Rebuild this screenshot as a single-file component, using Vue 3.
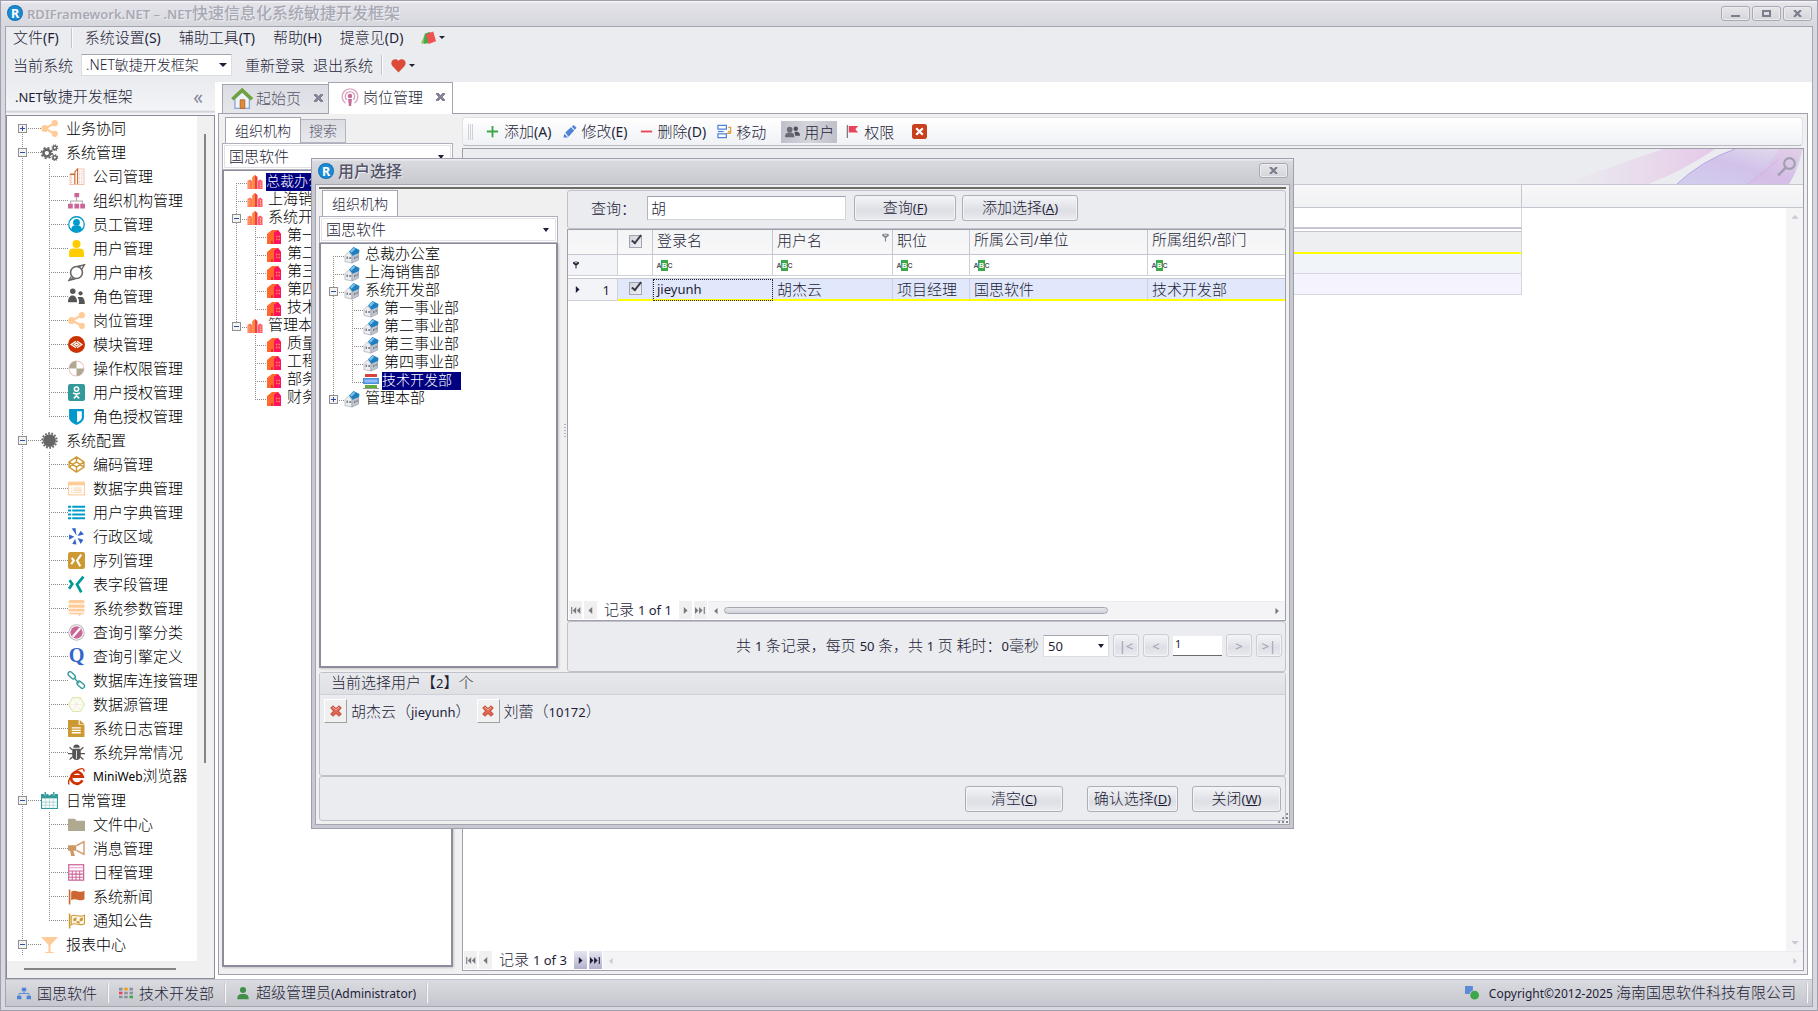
<script setup>
import { h, ref } from 'vue'

// Splits a caption into Latin and CJK runs; "&X" marks an underlined access key.
const Cap = (props) =>
  h('span', { class: 'cap' }, props.t.split(/([\x21-\x7e©–][\x20-\x7e©–]*)/).filter(Boolean).map((run) => {
    if (!/^[\x21-\x7e©–]/.test(run)) return run
    const m = run.match(/^(.*)&(.)(.*)$/)
    return h('span', { class: 'lat' }, m ? [m[1], h('u', m[2]), m[3]] : run)
  }))
Cap.props = ['t']

const icons = {
  share: '<g fill="#fc9" stroke="#fc9"><path d="M13 3 3.500 8 13 13" fill="none" stroke-width="2"/><circle cx="13" cy="3" r="2.400"/><circle cx="13" cy="13" r="2.400"/><circle cx="3.500" cy="8" r="2.800"/></g>',
  gears: '<g fill="none" stroke="#666"><circle cx="5.500" cy="8.500" r="3.200" stroke-width="2.400"/><circle cx="5.500" cy="8.500" r="5" stroke-width="1.600" stroke-dasharray="2 1.930"/><circle cx="13" cy="3.500" r="1.700" stroke-width="1.400"/><circle cx="13" cy="3.500" r="2.700" stroke-dasharray="1.100 1"/><circle cx="13" cy="12.800" r="1.700" stroke-width="1.400"/><circle cx="13" cy="12.800" r="2.700" stroke-dasharray="1.100 1"/></g>',
  company: '<g fill="none"><path d="M2 15.500V5.500h4v10M9 15.500V1h6v14.500z" stroke="#f4c3b0"/><path d="M3.500 7v8M11 3v12M13 3v12" stroke="#e9b8a6" stroke-dasharray="1 1"/><path d="M2 6h4.500M6.500 15.500V3.500L9 1v14.500" stroke="#c63"/><path d="M1 15.500h14" stroke="#f0c0b0"/></g>',
  org: '<path d="M8 5v4M2.500 11V8.500h11V11" fill="none" stroke="#aaa"/><path d="M6 1h4.500v4H6zM0 11h4.500v4.500H0zM6 11h4.500v4.500H6zM11.500 11H16v4.500h-4.500z" fill="#c69"/>',
  staff: '<circle cx="8" cy="8" r="7.300" fill="#fff" stroke="#09c" stroke-width="1.200"/><circle cx="8" cy="6" r="3.200" fill="#09c"/><path d="M3 13c0-3 2-4 3.500-4h3C11 9 13 10 13 13c-2.500 2.600-7.500 2.600-10 0z" fill="#09c"/>',
  user: '<circle cx="8" cy="3.800" r="3.800" fill="#fc0"/><path d="M1 16v-4.500C1 9 3 8 5 8h6c2 0 4 1 4 3.500V16z" fill="#fc0"/>',
  audit: '<circle cx="8" cy="8" r="5.600" fill="none" stroke="#666" stroke-width="1.500"/><path d="M1 15.500 5 13M15.500.500 10 2.500M9 2l6.500-1.200-2.500 4M7 14 .800 15.500l2.400-4" fill="none" stroke="#666" stroke-width="1.200"/>',
  roles: '<g fill="#555"><circle cx="4.500" cy="3" r="2.600"/><path d="M0 13.500C0 9 2 7 4 7s4.500 1 4.500 6.500z"/><circle cx="11.800" cy="5" r="2"/><path d="M9 8.500h4.500c1.500 1 2.500 4 2.300 6.500H10c1-2.500 0-5-1-6.500z"/></g>',
  module: '<circle cx="8" cy="8" r="8" fill="#c30"/><path d="M7.500 5 3 8l4.500 3M8.500 5 13 8l-4.500 3M6 8l2 1.400L10 8 8 6.600z" fill="none" stroke="#fff" stroke-width="1.200"/>',
  perm: '<circle cx="8" cy="8" r="7" fill="#fff" stroke="#ecc6c2"/><path d="M8 8V1a7 7 0 0 0-7 7zM8 8v7a7 7 0 0 0 7-7z" fill="#b0a991"/>',
  auth: '<rect width="16" height="16" rx="2" fill="#399"/><g fill="none" stroke="#fff" stroke-width="1.500"><circle cx="8" cy="4.800" r="2"/><path d="M4.800 8.300c2 1.400 4.400 1.400 6.400 0M5.500 13.500 8 11l2.500 2.500M8 9.500V11"/></g>',
  shield: '<path d="M1 1h14v8c0 3-3 5.500-7 7-4-1.500-7-4-7-7z" fill="#09c"/><path d="M8.500 3H13v6c0 2-2 3.500-4.500 4.500z" fill="#fff"/>',
  gear: '<circle cx="8" cy="8" r="6" fill="#666"/><circle cx="8" cy="8" r="6.800" fill="none" stroke="#666" stroke-width="1.800" stroke-dasharray="1.700 1.350"/>',
  pen: '<path d="M8 .800 15 5.500v5L8 15.200 1 10.500v-5zM1 5.500l7 5 7-5M1 10.500l7-5 7 5M8 1v4.500M8 10.500v4.500" fill="none" stroke="#c93" stroke-width="1.300"/>',
  dict: '<rect x=".500" y="2" width="15" height="12" fill="#fff" stroke="#fc9"/><path d="M0 2h16v3H0z" fill="#fc9"/><path d="M3 7.500h1M3 9.500h1M3 11.500h1M5 7.500h8M5 9.500h8M5 11.500h8" stroke="#fdd3ac"/>',
  list: '<path d="M0 2.500h3M4 2.500h12M0 6.200h3M4 6.200h12M0 9.800h3M4 9.800h12M0 13.500h3M4 13.500h12" stroke="#09c" stroke-width="1.900"/>',
  yelp: '<path d="M3.500.500 7 0l1 7zM1 6l5 2.200L1 11zM4 15l2.700-5 1.300 5.500zM9 9.500l5.500 1.500-2.500 4zM9 7.500 12 2.500 15 6z" fill="#36c"/>',
  xsq: '<rect width="16" height="16" rx="2" fill="#c93"/><path d="M3.500 5.500 5.500 8 3 11.500M12.500 2.500 8.500 8l3 5.500" fill="none" stroke="#fff" stroke-width="2"/>',
  x: '<path d="M1.500 4 4 7.500 1 12M14.500.500 8.500 8l4 7.500" fill="none" stroke="#099" stroke-width="2.600"/>',
  params: '<path d="M2 0h12l1.500 1v2H.500V1zM.500 4.200h15v3H.500zM.500 8.300h15v2.500H.500zM.500 12h15l-1 1.500h-2.500l-1 2-1.500-2H1.500z" fill="#fc9"/>',
  compass: '<circle cx="8" cy="8" r="7.300" fill="#fff" stroke="#bbb"/><circle cx="8" cy="8" r="5.800" fill="#c69"/><path d="M11.500 4 4.500 12" stroke="#fff" stroke-width="2"/>',
  q: '<text x="8" y="13" text-anchor="middle" font-family="Liberation Serif, serif" font-weight="700" font-size="19" fill="#36c">Q</text>',
  link: '<g fill="none" stroke="#399" stroke-width="1.300"><rect x="-1" y="1.700" width="8" height="4" rx="2" transform="rotate(42 4 4)"/><rect x="8" y="10" width="8" height="4" rx="2" transform="rotate(42 12 12)"/><path d="M5.500 5.500l5 5"/></g>',
  source: '<path d="M4.500 1.500h7l4 6.500-4 6.500h-7L.500 8z" fill="#fbfdf3" stroke="#dceaa8"/><path d="M4.500 1.500 11.500 14.500M11.500 1.500l-7 13M1 8h14" stroke="#f3dfdb" stroke-dasharray="1 1"/>',
  log: '<path d="M0 0h10v4.500h5.500V16H0z" fill="#c93"/><path d="M11 0l4.500 4H11z" fill="#c93"/><path d="M3.500 7.500H12M3.500 9.800H12M3.500 12H12" stroke="#fff" stroke-width="1.200"/>',
  bug: '<path d="M5 3.500a3 3 0 0 1 6 0z" fill="#555"/><path d="M4 4.500h8V11c0 2-1.500 4-4 4s-4-2-4-4z" fill="#555"/><path d="M1.500 3 4 5.500M14.500 3 12 5.500M0 9h16M1.500 14.500 4.500 12M14.500 14.500 11.500 12" stroke="#555" stroke-width="1.200"/><path d="M8 6v8" stroke="#ddd"/>',
  ie: '<path d="M13.500 11.500A5.500 5.500 0 1 1 13.800 8H4.500" fill="none" stroke="#c30" stroke-width="2.600"/><path d="M1 15.500C-1 12 5 3 11 1c3-1 4.500 0 4 2.500" fill="none" stroke="#c30" stroke-width="1.300"/>',
  cal: '<rect x=".500" y="2.500" width="15" height="13" fill="#fff" stroke="#399"/><path d="M0 2h16v4H0z" fill="#399"/><path d="M4 0v3M12 0v3M8 0v3" stroke="#fff" stroke-width="2"/><path d="M4 0v3M12 0v3" stroke="#399" stroke-width="1.300"/><path d="M1 9.500h14M1 12.500h14M4.500 6v9M8 6v9M11.500 6v9" stroke="#b6dcdc"/>',
  folder: '<path d="M0 2.500h6.500L8 4.500h8v9.500H0z" fill="#b0a991"/>',
  horn: '<path d="M0 5h8v5H5l1.500 5H3L2 10H0z" fill="#c96"/><path d="M8 5.300 15 1.500v12L8 9.800" fill="#fff" stroke="#c96" stroke-width="1.300"/>',
  sched: '<rect x=".700" y=".700" width="14" height="14.500" fill="#fff" stroke="#c69" stroke-width="1.200"/><path d="M.500 3.500h14" stroke="#e9c" stroke-width="1"/><path d="M1 6.500h14M1 9.500h14M1 12.500h14M4 6v9M7.500 6v9M11 6v9" stroke="#c69"/>',
  flag: '<path d="M1.500 1.500v14" stroke="#c63" stroke-width="1.500"/><path d="M3 3.500c4-3 7 2 12.500-1v8c-5 3-8-2-12.500 1z" fill="#c63"/>',
  notice: '<path d="M1.500 1.500v14" stroke="#c93" stroke-width="1.500"/><path d="M3 4c4-3 7 2 12.500-1v8c-5 3-8-2-12.500 1z" fill="#fff8ea" stroke="#c93"/><path d="M5 6l3-1v3l-3 1zM11 6l3-1v3l-3 1zM8 8.500l3 .500v2l-3-1z" fill="#c93"/>',
  filter: '<path d="M0 1h16L9 8.500V15h3v1H4v-1h3V8.500z" fill="#fc9"/>',
  towers: '<path d="M5.500 3.500 8 1l2.500 2V15h-5z" fill="#f33c3c"/><path d="M5.500 3.500 8 1v14H5.500z" fill="#ff8a3a"/><path d="M.500 7 3 5.500 5 7v8H.500z" fill="#ff7a5a"/><path d="M11 7l2-1.500L15.500 7v8H11z" fill="#ff5a80"/><path d="M2 8v6M13.500 8v6" stroke="#ffd24a" stroke-dasharray="1.500 1"/>',
  hall: '<path d="M1 6 6 2h6l3 4v10H1z" fill="#ff6a2a"/><path d="M8 4.500 12 2l3 4v10H8z" fill="#ff1060"/><path d="M10 8.500h4M10 11.500h4" stroke="#ff8a4a" stroke-width="1.500" stroke-dasharray="1.500 1"/><path d="M5 13h2v3H5z" fill="#e33"/>',
  house: '<path d="M1 8.500 4.500 5 8 8.500V16l-7-1.500z" fill="#eceef1" stroke="#b0b4bd" stroke-width=".800"/><path d="M8 8l6.500-3v8L8 16z" fill="#c3c7cf" stroke="#9ca1ac" stroke-width=".800"/><path d="M5 4.500 9.500 0 15.500 3 15 6 8.500 8.800z" fill="#1f7fc0"/><path d="M6 4 9.500.800l2 1-4 4z" fill="#7cc4ea"/><path d="M2.500 9.500H4V12H2.500zM5.300 10H7v2H5.300zM10 10l1.500-.800v2.500L10 12.500zM12.500 9l1.300-.600v2.400l-1.300.700z" fill="#7d8390"/>',
  stack: '<path d="M2 1h12v3H2z" fill="#d8433c"/><path d="M0 5h16v6H0z" fill="#4d8fe0"/><path d="M1.500 6.500h13v3h-13z" fill="#8fbdf5"/><path d="M2 12h12v3H2z" fill="#5fae3e"/><path d="M0 15h16v1H0z" fill="#999"/>',
  home: '<path d="M3 8v7.500h11V8L8.500 3z" fill="#eef3fb" stroke="#8aa6cf"/><path d="M1 8.500 8.500 1.500 16 8.500" fill="none" stroke="#6da33a" stroke-width="2.600"/><path d="M7 9h3.500v6.500H7z" fill="#e08a3c" stroke="#b5651f" stroke-width=".700"/>',
  cast: '<g fill="none" stroke="#d9a3bf" stroke-width="1.200"><path d="M4 13.500a7 7 0 1 1 8 0"/><path d="M5.200 10.500a4.200 4.200 0 1 1 5.600 0"/></g><circle cx="8" cy="7" r="2" fill="#c76b98"/><path d="M6.300 9.800h3.400L9 16H7z" fill="#c76b98"/>',
  add: '<path d="M8 2v12M2 8h12" stroke="#3ea64b" stroke-width="2"/>',
  edit: '<path d="M1.500 14.500l1-4 4 4zM3.500 9l6-5.500L13 7l-6 6.500z" fill="#4f83d6"/><path d="M10.500 2.800 12.500 1 15.500 4l-1.800 2z" fill="#4f83d6"/>',
  del: '<path d="M2 8h12" stroke="#e8455a" stroke-width="2"/>',
  move: '<path d="M1 1.500h9v4H1zM1 10.500h9v4H1z" fill="#fff" stroke="#4f83d6" stroke-width="1.300"/><path d="M1 8h6" stroke="#4f83d6" stroke-width="1.300"/><path d="M12 3.500h2.500v6M14.500 10 12 7.500M14.500 10h-4" fill="none" stroke="#e89a2a" stroke-width="1.300"/>',
  people: '<g fill="#6a6a75"><circle cx="5" cy="6" r="3"/><path d="M0 14c0-4 2-5 5-5s5 1 5 5z"/></g><circle cx="11.500" cy="5" r="2.400" fill="#50505c"/><path d="M10 8.500c4-.800 6 .500 6 4h-5z" fill="#50505c"/>',
  rflag: '<path d="M2.500 1v14" stroke="#777" stroke-width="1.300"/><path d="M4 2h10l-3 3.500L14 9H4z" fill="#e8455a"/>',
  exit: '<rect width="16" height="16" rx="3" fill="#c8401c"/><path d="M4.500 4.500l7 7M11.500 4.500l-7 7" stroke="#fff" stroke-width="2.400"/>',
  bag: '<path d="M4 5 0 14l5 1z" fill="#8cc63f"/><path d="M4 4l5-2 4 3-6 9.500-4-.500z" fill="#3fa857"/><path d="M5.500 4.500l7.500-3 3 10.500-8 3z" fill="#f0524f"/>',
  heart: '<path d="M8 15.500 1.500 8.500C-2 4 3.500-1.500 8 3c4.500-4.500 10 1 6.500 5.500z" fill="#dc4a38"/>',
  net: '<path d="M5.500 2h5v4h-5zM0 11h5v4H0zM11 11h5v4h-5z" fill="#4f83d6"/><path d="M8 6v3M2.500 11V8.500h11V11" fill="none" stroke="#4f83d6"/>',
  tiles: '<path d="M0 2h4v3H0zM12 2h4v3h-4zM6 6.500h4v3H6zM12 6.500h4v3h-4zM0 11h4v3H0zM6 11h4v3H6z" fill="#8d8f9b"/><path d="M6 2h4v3H6z" fill="#f59b0b"/><path d="M0 6.500h4v3H0z" fill="#e8455a"/><path d="M12 11h4v3h-4z" fill="#3ea64b"/>',
  admin: '<circle cx="8" cy="4.500" r="3.500" fill="#3f8f4b"/><path d="M1.500 15c0-5 2-6 6.500-6s6.500 1 6.500 6z" fill="#3f8f4b"/>',
  sync: '<path d="M0 0h9v5a6 6 0 0 0-4 4H0z" fill="#5b8ad8"/><circle cx="11" cy="10.500" r="5" fill="#3ea64b"/>',
  search: '<circle cx="10.500" cy="5.500" r="4.500" fill="none" stroke="#a09fb0" stroke-width="1.800"/><path d="M7.500 8.800 1 15.500" stroke="#a09fb0" stroke-width="2"/>',
  funnel: '<ellipse cx="8" cy="4" rx="6" ry="3" fill="currentColor"/><path d="M3 5l4 4v6h2V9l4-4z" fill="currentColor"/><ellipse cx="8" cy="3.500" rx="3" ry="1" fill="#fff"/>',
  cross: '<path d="M2 4.500 4.500 2 8 5.200 11.500 2 14 4.500 10.800 8l3.200 3.500L11.500 14 8 10.800 4.500 14 2 11.500 5.200 8z" fill="#e2674f" stroke="#b23a2a"/><path d="M4 4.500 4.800 3.700 8 6.800l3.500-3" fill="none" stroke="#f6b7a6"/>',
  first: '<path d="M2.500 3v10" stroke="currentColor" stroke-width="1.600"/><path d="M9 3v10L4 8zM15 3v10l-5-5z" fill="currentColor"/>',
  last: '<path d="M13.500 3v10" stroke="currentColor" stroke-width="1.600"/><path d="M7 3v10l5-5zM1 3v10l5-5z" transform="translate(-1 0)" fill="currentColor"/>',
  prev: '<path d="M10.500 3v10L5 8z" fill="currentColor"/>',
  next: '<path d="M5.500 3v10L11 8z" fill="currentColor"/>',
  up: '<path d="M3 11h10L8 6z" fill="currentColor"/>',
  down: '<path d="M3 6h10l-5 5z" fill="currentColor"/>',
  logo: '<circle cx="8" cy="8" r="8" fill="#1173b8"/><circle cx="8" cy="8" r="7" fill="#1b8ad3"/><text x="8" y="12.500" text-anchor="middle" font-family="Noto Sans, sans-serif" font-weight="700" font-size="12.500" fill="#fff">R</text>',
}
const Ico = (props) => h('svg', { class: 'ico', viewBox: '0 0 16 16', 'aria-hidden': 'true', innerHTML: icons[props.n] })
Ico.props = ['n']

const tree = (groups) =>
  groups.flatMap(([icon, text, kids = [], box = kids.length ? 'minus' : '', childIcon], i) => {
    const first = i === 0
    const last = i === groups.length - 1
    return [
      { icon, text, box, guides: [['h', first ? (last ? '' : 'b') : last && !groups.open ? 't' : 'v', box]] },
      ...kids.map((k, j) => {
        const [ki, kt] = Array.isArray(k) ? k : [childIcon, k]
        return { icon: ki, text: kt, guides: [[last ? '' : 'v'], ['h', j === kids.length - 1 ? 't' : 'v']] }
      }),
    ]
  })

const navGroups = [
  ['share', '业务协同', [], 'plus'],
  ['gears', '系统管理', [['company', '公司管理'], ['org', '组织机构管理'], ['staff', '员工管理'], ['user', '用户管理'], ['audit', '用户审核'], ['roles', '角色管理'], ['share', '岗位管理'], ['module', '模块管理'], ['perm', '操作权限管理'], ['auth', '用户授权管理'], ['shield', '角色授权管理']]],
  ['gear', '系统配置', [['pen', '编码管理'], ['dict', '数据字典管理'], ['list', '用户字典管理'], ['yelp', '行政区域'], ['xsq', '序列管理'], ['x', '表字段管理'], ['params', '系统参数管理'], ['compass', '查询引擎分类'], ['q', '查询引擎定义'], ['link', '数据库连接管理'], ['source', '数据源管理'], ['log', '系统日志管理'], ['bug', '系统异常情况'], ['ie', 'MiniWeb浏览器']]],
  ['cal', '日常管理', [['folder', '文件中心'], ['horn', '消息管理'], ['sched', '日程管理'], ['flag', '系统新闻'], ['notice', '通知公告']]],
  ['filter', '报表中心', [], 'minus'],
]
navGroups.open = true
const nav = tree(navGroups)

const orgs = tree([
  ['towers', '总裁办公室'],
  ['towers', '上海销售部'],
  ['towers', '系统开发部', ['第一事业部', '第二事业部', '第三事业部', '第四事业部', '技术开发部'], 'minus', 'hall'],
  ['towers', '管理本部', ['质量管理部', '工程管理部', '部务办公室', '财务管理部'], 'minus', 'hall'],
])
const picks = tree([
  ['house', '总裁办公室'],
  ['house', '上海销售部'],
  ['house', '系统开发部', ['第一事业部', '第二事业部', '第三事业部', '第四事业部', ['stack', '技术开发部']], 'minus', 'house'],
  ['house', '管理本部', [], 'plus'],
])

const menus = ['系统设置(S)', '辅助工具(T)', '帮助(H)', '提意见(D)']
const tools = [['add', '添加(A)'], ['edit', '修改(E)'], ['del', '删除(D)'], ['move', '移动'], ['people', '用户'], ['rflag', '权限']]
const columns = ['登录名', '用户名', '职位', '所属公司/单位', '所属组织/部门']
const record = ['jieyunh', '胡杰云', '项目经理', '国思软件', '技术开发部']
const chosen = ['胡杰云（jieyunh）', '刘蕾（10172）']
const keyword = ref('胡')
const page = ref('1')
</script>

<template>
  <div class="window">
    <header class="titlebar">
      <Ico n="logo" />
      <h1><Cap t="RDIFramework.NET – .NET快速信息化系统敏捷开发框架" /></h1>
      <div class="winbtns">
        <button aria-label="最小化"><i class="g-min"></i></button>
        <button aria-label="最大化"><i class="g-max"></i></button>
        <button aria-label="关闭"><svg viewBox="0 0 10 8"><path d="M1 0l8 8M9 0 1 8" /></svg></button>
      </div>
    </header>

    <div class="frame">
      <nav class="menubar">
        <button><Cap t="文件(F)" /></button>
        <i class="sep"></i>
        <button v-for="m in menus" :key="m"><Cap :t="m" /></button>
        <button class="drop" aria-label="皮肤"><Ico n="bag" /><i class="caret"></i></button>
      </nav>
      <div class="systembar">
        <label for="sys">当前系统</label>
        <span class="combo sys"><select id="sys"><option>.NET敏捷开发框架</option></select><i class="caret"></i></span>
        <button>重新登录</button>
        <button>退出系统</button>
        <i class="sep"></i>
        <button class="drop" aria-label="收藏"><Ico n="heart" /><i class="caret"></i></button>
      </div>

      <div class="body">
        <aside class="sidebar">
          <div class="side-head"><Cap t=".NET敏捷开发框架" /><button aria-label="折叠">«</button></div>
          <div class="side-box">
            <div class="side-main">
              <ul class="tree nav">
                <li v-for="(r, i) in nav" :key="i">
                  <i v-for="(g, k) in r.guides" :key="k" class="guide" :class="g"></i>
                  <Ico :n="r.icon" /><a href="#"><Cap :t="r.text" /></a>
                </li>
              </ul>
              <div class="vscroll"><i></i></div>
            </div>
            <div class="hscroll"><i></i></div>
          </div>
        </aside>

        <main class="docs">
          <div class="doctabs">
            <button class="doctab"><Ico n="home" />起始页<b class="x"></b></button>
            <button class="doctab on"><Ico n="cast" />岗位管理<b class="x"></b></button>
          </div>
          <div class="page">
            <section class="orgpane">
              <div class="tabs"><button class="on">组织机构</button><button>搜索</button></div>
              <div class="combo wide"><select aria-label="公司"><option>国思软件</option></select><i class="caret"></i></div>
              <ul class="tree org">
                <li v-for="(r, i) in orgs" :key="i">
                  <i v-for="(g, k) in r.guides" :key="k" class="guide" :class="g"></i>
                  <Ico :n="r.icon" /><span class="label" :class="{ sel: i === 0 }">{{ r.text }}</span>
                </li>
              </ul>
            </section>

            <section class="work">
              <div class="toolbar">
                <i class="grip"></i>
                <button v-for="t in tools" :key="t[0]" :class="{ on: t[0] === 'people' }"><Ico :n="t[0]" /><Cap :t="t[1]" /></button>
                <button aria-label="退出"><Ico n="exit" /></button>
              </div>
              <div class="gridbox">
                <div class="group">
                  <svg class="petals" viewBox="0 0 260 35" aria-hidden="true">
                    <defs>
                      <linearGradient id="pk" x1="0" x2="1"><stop offset="0" stop-color="#e6cfe6" stop-opacity="0" /><stop offset="1" stop-color="#e6c8ea" /></linearGradient>
                      <linearGradient id="pp" x1="0" y1="1" x2="1" y2="0"><stop offset="0" stop-color="#c9c4ee" /><stop offset=".5" stop-color="#c9b3e8" /><stop offset="1" stop-color="#e2dbea" /></linearGradient>
                    </defs>
                    <path d="M20 35Q90 10 120 0H172Q140 22 105 35z" fill="url(#pk)" />
                    <path d="M134 35Q158 12 192 0H260Q255 22 246 35z" fill="url(#pp)" opacity=".75" />
                    <path d="M134 35Q158 12 192 0" fill="none" stroke="#b9a8e6" />
                    <path d="M204 35Q225 20 236 0H260L246 35z" fill="#dcb9e2" opacity=".4" />
                    <path d="M204 35Q222 24 236 10" fill="none" stroke="#d5a8dc" opacity=".6" />
                  </svg>
                  <Ico n="search" />
                </div>
                <div class="gridmain">
                  <table class="posts">
                    <thead><tr><th></th><th></th></tr></thead>
                    <tbody>
                      <tr class="blank"><td></td><td></td></tr>
                      <tr class="gap"><td></td><td></td></tr>
                      <tr class="cur"><td></td><td></td></tr>
                      <tr class="even"><td></td><td></td></tr>
                      <tr class="odd"><td></td><td></td></tr>
                    </tbody>
                  </table>
                  <div class="gscroll"><Ico n="up" /><Ico n="down" /></div>
                </div>
                <div class="navigator">
                  <button disabled aria-label="首条"><Ico n="first" /></button>
                  <button disabled aria-label="上一条"><Ico n="prev" /></button>
                  <Cap t="记录 1 of 3" />
                  <button class="hot" aria-label="下一条"><Ico n="next" /></button>
                  <button class="hot" aria-label="末条"><Ico n="last" /></button>
                  <div class="track dim"><Ico n="prev" /><Ico n="next" /></div>
                </div>
              </div>
            </section>
          </div>
        </main>
      </div>

      <footer class="status">
        <span><Ico n="net" />国思软件</span><i class="sep"></i>
        <span><Ico n="tiles" />技术开发部</span><i class="sep"></i>
        <span><Ico n="admin" /><Cap t="超级管理员(Administrator)" /></span><i class="sep"></i>
        <span class="copy"><Ico n="sync" /><Cap t="Copyright©2012-2025 海南国思软件科技有限公司" /></span><i class="sep"></i>
      </footer>
    </div>

    <div class="dialog" role="dialog" aria-labelledby="dlg">
      <div class="dlg-title">
        <Ico n="logo" /><h2 id="dlg">用户选择</h2>
        <div class="winbtns"><button aria-label="关闭"><svg viewBox="0 0 10 8"><path d="M1 0l8 8M9 0 1 8" /></svg></button></div>
      </div>
      <div class="dlg-body">
        <div class="dlg-top">
          <section class="orgpane">
            <div class="tabs"><button class="on">组织机构</button></div>
            <div class="combo wide"><select aria-label="公司"><option>国思软件</option></select><i class="caret"></i></div>
            <ul class="tree org">
              <li v-for="(r, i) in picks" :key="i">
                <i v-for="(g, k) in r.guides" :key="k" class="guide" :class="g"></i>
                <Ico :n="r.icon" /><span class="label" :class="{ sel: r.icon === 'stack' }">{{ r.text }}</span>
              </li>
            </ul>
          </section>
          <i class="splitter"></i>
          <section class="users">
            <form class="panel query" @submit.prevent>
              <label for="kw">查询：</label>
              <input id="kw" v-model="keyword" type="text" />
              <button class="btn find"><Cap t="查询(&F)" /></button>
              <button class="btn pick" type="button"><Cap t="添加选择(&A)" /></button>
            </form>
            <div class="usergrid">
              <table class="people">
                <colgroup><col class="c0" /><col class="c1" /><col class="c2" /><col class="c2" /><col class="c4" /><col class="c5" /><col /></colgroup>
                <thead>
                  <tr>
                    <th></th>
                    <th><input type="checkbox" checked aria-label="全选" /></th>
                    <th v-for="(c, i) in columns" :key="c"><div><Cap :t="c" /><Ico v-if="i === 1" n="funnel" /></div></th>
                  </tr>
                </thead>
                <tbody>
                  <tr class="filter">
                    <td><Ico n="funnel" /></td><td></td>
                    <td v-for="c in columns" :key="c"><span class="abc"><i>A</i><b>B</b><i>C</i></span></td>
                  </tr>
                  <tr class="gap"><td colspan="7"></td></tr>
                  <tr class="row">
                    <td><div class="rownum"><Ico n="next" /><Cap t="1" /></div></td>
                    <td><input type="checkbox" checked aria-label="选择 胡杰云" /></td>
                    <td v-for="c in record" :key="c"><Cap :t="c" /></td>
                  </tr>
                </tbody>
              </table>
              <div class="navigator">
                <button disabled aria-label="首条"><Ico n="first" /></button>
                <button disabled aria-label="上一条"><Ico n="prev" /></button>
                <Cap t="记录 1 of 1" />
                <button disabled aria-label="下一条"><Ico n="next" /></button>
                <button disabled aria-label="末条"><Ico n="last" /></button>
                <div class="track"><Ico n="prev" /><i class="thumb"></i><Ico n="next" /></div>
              </div>
            </div>
            <div class="panel pager">
              <Cap t="共 1 条记录，每页 50 条，共 1 页 耗时：0毫秒" />
              <span class="combo size"><select aria-label="每页条数"><option>50</option></select><i class="caret"></i></span>
              <button class="btn" disabled>|&lt;</button>
              <button class="btn" disabled>&lt;</button>
              <input v-model="page" type="text" aria-label="页码" />
              <button class="btn" disabled>&gt;</button>
              <button class="btn" disabled>&gt;|</button>
            </div>
          </section>
        </div>
        <section class="panel selected">
          <h3><Cap t="当前选择用户【2】个" /></h3>
          <div class="chips">
            <span v-for="c in chosen" :key="c"><button :aria-label="'移除 ' + c"><Ico n="cross" /></button><Cap :t="c" /></span>
          </div>
        </section>
        <div class="panel actions">
          <button class="btn clear"><Cap t="清空(&C)" /></button>
          <button class="btn ok"><Cap t="确认选择(&D)" /></button>
          <button class="btn close"><Cap t="关闭(&W)" /></button>
        </div>
      </div>
      <i class="resize"></i>
    </div>
  </div>
</template>

<style>
body {
  margin: 0;
}
.ico {
  width: 16px;
  height: 16px;
  flex: none;
  display: block;
  overflow: visible;
}
.cap {
  white-space: pre;
}
.lat {
  font-size: 12px;
  font-weight: 400;
}
</style>

<style scoped>
.window {
  position: relative;
  box-sizing: border-box;
  height: 100vh;
  display: flex;
  flex-direction: column;
  padding: 0 4px 3px;
  border: 1px solid #9f9fae;
  background: #d8d8e0;
  color: #1e1e38;
  font: 300 15px/20px "Noto Sans", "Noto Sans CJK SC", sans-serif;
  text-spacing-trim: space-all;
  overflow: hidden;
}
.window *,
.window *::before,
.window *::after {
  box-sizing: border-box;
}
button {
  font: inherit;
  color: inherit;
  border: 0;
  padding: 0;
  background: none;
  white-space: nowrap;
}
select,
input {
  font: inherit;
  color: inherit;
}
h1,
h2,
h3,
ul {
  margin: 0;
  padding: 0;
  font-weight: 300;
}
.titlebar {
  display: flex;
  align-items: center;
  gap: 4px;
  height: 25px;
  flex: none;
  margin: 0 -4px;
  padding: 0 5px 1px 6px;
  background: linear-gradient(#f4f4f8 0 1px, #e3e3e9 2px, #d7d8de);
}
h1 {
  flex: 1;
  font-size: 16px;
  font-weight: 500;
  color: #a9a9b5;
  text-shadow: 1px 1px 0 #eeeef2;
}
h1 :deep(.lat) {
  font-size: 13px;
  font-weight: 600;
}
.winbtns {
  display: flex;
  gap: 2px;
}
.winbtns button {
  width: 29px;
  height: 15px;
  display: flex;
  align-items: center;
  justify-content: center;
  border: 1px solid #a9a9b6;
  border-radius: 3px;
  background: linear-gradient(#e6e6ea, #d4d5da);
  box-shadow: inset 0 0 0 1px #ececf0;
}
.winbtns svg {
  width: 9px;
  height: 7px;
  stroke: #7d7d8e;
  stroke-width: 2.500;
}
.g-min {
  width: 9px;
  height: 2px;
  margin-top: 5px;
  background: #7d7d8e;
}
.g-max {
  width: 9px;
  height: 7px;
  border: 2px solid #7d7d8e;
}
.frame {
  flex: 1;
  min-height: 0;
  display: flex;
  flex-direction: column;
  border: 1px solid #a5a5b2;
  background: #ebecf0;
}
.menubar,
.systembar {
  display: flex;
  align-items: center;
  flex: none;
  height: 22px;
  padding-left: 7px;
}
.menubar {
  gap: 18px;
  padding-bottom: 1px;
}
.menubar :deep(.lat) {
  font-size: 14px;
}
.menubar .sep {
  margin: 0 -6px;
}
.sep {
  width: 2px;
  height: 20px;
  background: linear-gradient(90deg, #c4c5ce 50%, #fafafc 50%);
}
.drop {
  display: flex;
  align-items: center;
  gap: 3px;
}
.drop .ico {
  width: 15px;
  height: 15px;
}
.caret {
  border: 4px solid transparent;
  border-top-color: #1e1e38;
  border-bottom: 0;
  width: 0;
  height: 0;
}
.drop .caret {
  border-width: 3px;
  border-bottom: 0;
}
.systembar {
  height: 33px;
  padding-bottom: 1px;
  gap: 8px;
}
.systembar .combo + button {
  margin-left: 5px;
}
.combo {
  display: flex;
  align-items: center;
  border: 1px solid #dcdce3;
  border-top-color: #a5a5b2;
  background: #fff;
}
.combo select {
  flex: 1;
  min-width: 0;
  height: 20px;
  padding: 0 0 0 4px;
  border: 0;
  background: none;
  appearance: none;
}
.combo .caret {
  margin-right: 4px;
}
.combo.sys {
  width: 151px;
  height: 22px;
}
.sys select {
  font-size: 14px;
}
.body {
  flex: 1;
  min-height: 0;
  display: flex;
  background: #fff;
}
.sidebar {
  width: 209px;
  flex: none;
  display: flex;
  flex-direction: column;
  background: #ebecf0;
}
.side-head {
  display: flex;
  align-items: center;
  justify-content: space-between;
  height: 33px;
  padding: 0 12px 4px 9px;
  background: linear-gradient(#ebecf0, #f3f4f6 28px, #c9cad3 30px, #f4f4f7 31px);
}
.side-head :deep(.lat) {
  font-size: 13px;
}
.side-head button {
  font-size: 19px;
  font-weight: 400;
  color: #85859a;
}
.side-box {
  flex: 1;
  min-height: 0;
  display: flex;
  flex-direction: column;
  border: 1px solid #8c8c9c;
  background: #fff;
}
.side-main {
  flex: 1;
  min-height: 0;
  display: flex;
}
.vscroll {
  width: 17px;
  flex: none;
  padding: 18px 6px 0 7px;
  background: #f0f0f0;
}
.vscroll i {
  display: block;
  width: 2px;
  height: 76%;
  background: #858585;
}
.hscroll {
  height: 17px;
  padding: 7px 40px 0 17px;
  background: #f0f0f0;
}
.hscroll i {
  display: block;
  width: 152px;
  height: 2px;
  background: #858585;
}
.tree {
  list-style: none;
  flex: 1;
  min-width: 0;
  overflow: hidden;
  color: #000;
  background: #fff;
}
.tree li {
  display: flex;
  align-items: center;
  white-space: nowrap;
}
.nav li {
  height: 24px;
}
.nav a {
  color: #000;
  text-decoration: none;
  margin-left: 8px;
}
.nav .ico {
  width: 17px;
  height: 17px;
}
.guide {
  --c: 15px;
  --m: 12px;
  --y: repeating-linear-gradient(#8a8a8a 0 1px, transparent 1px 2px) var(--c) 0 / 1px 100% no-repeat;
  --x: repeating-linear-gradient(90deg, #8a8a8a 0 1px, transparent 1px 2px) var(--c) var(--m) / 100% 1px no-repeat;
  align-self: stretch;
  flex: none;
  display: flex;
  align-items: center;
  width: 34px;
  border-right: 4px solid transparent;
}
.guide.v {
  background: var(--y);
}
.guide.h {
  background: var(--x);
}
.guide.h.v {
  background: var(--y), var(--x);
}
.guide.h.t {
  background: repeating-linear-gradient(#8a8a8a 0 1px, transparent 1px 2px) var(--c) 0 / 1px var(--m) no-repeat, var(--x);
}
.guide.h.b {
  background: repeating-linear-gradient(#8a8a8a 0 1px, transparent 1px 2px) var(--c) var(--m) / 1px 100% no-repeat, var(--x);
}
.guide.v,
.guide.h {
  background-clip: padding-box;
}
.guide + .guide {
  --c: 8px;
  width: 27px;
}
.guide.plus::before,
.guide.minus::before {
  content: "";
  width: 9px;
  height: 9px;
  margin-left: calc(var(--c) - 4px);
  border: 1px solid #8f8f8f;
  background: linear-gradient(#2b4f9c, #2b4f9c) center / 5px 1px no-repeat, #f4f4f4;
}
.guide.plus::before {
  background: linear-gradient(#2b4f9c, #2b4f9c) center / 5px 1px no-repeat, linear-gradient(#2b4f9c, #2b4f9c) center / 1px 5px no-repeat, #f4f4f4;
}
.org li {
  height: 18px;
}
.org .guide {
  --c: 12px;
  --m: 10px;
  width: 23px;
  border-right: 0;
}
.org .guide + .guide {
  --c: 8px;
  width: 19px;
}
.label {
  height: 18px;
  line-height: 15px;
  margin-left: 3px;
  padding: 0 2px;
}
.label.sel {
  font-size: 14px;
  line-height: 16px;
  padding: 0 9px 0 0;
  color: #fff;
  background: #000080;
}
.docs {
  flex: 1;
  min-width: 0;
  display: flex;
  flex-direction: column;
  padding: 0 4px 4px 3px;
}
.doctabs {
  display: flex;
  align-items: flex-end;
  height: 32px;
  flex: none;
  padding-left: 4px;
}
.doctab {
  display: flex;
  align-items: center;
  height: 30px;
  width: 106px;
  padding: 0 5px 2px 8px;
  gap: 4px;
  border: 1px solid #a5a5b2;
  border-right: 0;
  background: linear-gradient(#dcdde3, #e6e7eb);
  color: #55556a;
}
.doctab .ico {
  width: 21px;
  height: 21px;
}
.doctab.on {
  position: relative;
  width: 125px;
  height: 32px;
  padding: 0 7px 3px 12px;
  border-right: 1px solid #a5a5b2;
  border-bottom: 0;
  background: #fff;
  color: #1e1e38;
}
.doctab.on .ico {
  width: 18px;
  height: 18px;
}
.x {
  width: 9px;
  height: 8px;
  margin-left: auto;
  background: linear-gradient(48deg, transparent 38%, #85859a 38% 62%, transparent 62%), linear-gradient(-48deg, transparent 38%, #85859a 38% 62%, transparent 62%);
}
.page {
  flex: 1;
  min-height: 0;
  display: flex;
  gap: 9px;
  margin-top: -1px;
  padding: 3px;
  border: 1px solid #9f9fae;
  background: #f0f0f0;
}
.orgpane {
  width: 231px;
  flex: none;
  display: flex;
  flex-direction: column;
  padding-bottom: 4px;
}
.tabs {
  display: flex;
  align-items: flex-end;
  height: 26px;
  flex: none;
  padding-left: 3px;
  font-size: 14px;
}
.tabs button {
  height: 24px;
  width: 45px;
  border: 1px solid #b5b5c1;
  border-left: 0;
  background: linear-gradient(#dcdde2, #e8e9ed);
  color: #55556a;
}
.tabs .on {
  width: 76px;
  height: 26px;
  border: 1px solid #a5a5b2;
  border-bottom: 0;
  background: #fff;
  color: #1e1e38;
}
.combo.wide {
  height: 27px;
  flex: none;
  border: 1px solid #b0b0bc;
  outline: 1px solid #e2e2e8;
  outline-offset: -3px;
}
.wide select {
  height: 23px;
  padding: 0 0 2px 6px;
}
.wide .caret {
  border-width: 3px;
  border-top-width: 4px;
  border-bottom: 0;
  margin-right: 8px;
}
.org {
  border: 2px solid #8c8c9c;
  border-top-width: 1px;
  padding-top: 2px;
  box-shadow: 1px 1px 2px #c8c8c8;
}
.work {
  flex: 1;
  min-width: 0;
  display: flex;
  flex-direction: column;
  gap: 2px;
}
.toolbar {
  display: flex;
  align-items: center;
  gap: 11px;
  height: 29px;
  flex: none;
  margin-right: 1px;
  padding-left: 5px;
  border: 1px solid #e0e1e6;
  border-bottom-color: #b9b9c4;
  border-radius: 4px;
  background: linear-gradient(#fff, #eff1f5);
}
.toolbar button {
  display: flex;
  align-items: center;
  gap: 4px;
  height: 22px;
}
.toolbar :deep(.lat) {
  font-size: 14px;
}
.toolbar .ico {
  width: 15px;
  height: 15px;
}
.toolbar .on {
  margin-left: 4px;
  padding: 0 3px 0 4px;
  background: linear-gradient(90deg, #bfc0c9, #d5d5dc 50%, #bfc0c9);
}
.toolbar .on + button {
  margin-left: -3px;
}
.toolbar button:last-child {
  margin-left: 7px;
}
.grip {
  width: 5px;
  height: 16px;
  background: repeating-linear-gradient(90deg, #d0d1d8 0 1px, transparent 1px 2px);
  margin-right: 1px;
}
.gridbox {
  flex: 1;
  min-height: 0;
  display: flex;
  flex-direction: column;
  border: 1px solid #9f9fae;
  background: #fff;
}
.group {
  display: flex;
  align-items: center;
  justify-content: flex-end;
  height: 36px;
  flex: none;
  border-bottom: 1px solid #c6c6d0;
  background: #ebecf0;
}
.petals {
  width: 260px;
  height: 35px;
  margin-right: -26px;
}
.group .ico {
  width: 19px;
  height: 19px;
  margin-right: 7px;
}
.gridmain {
  flex: 1;
  min-height: 0;
  display: flex;
  align-items: flex-start;
}
table {
  border-collapse: separate;
  border-spacing: 0;
  table-layout: fixed;
}
.posts {
  width: 100%;
  margin-right: -17px;
}
th,
td {
  padding: 0;
  font-weight: 300;
  text-align: left;
  white-space: nowrap;
}
.posts th {
  height: 23px;
  border: 1px solid #c6c6d0;
  border-width: 0 1px 1px 0;
  background: linear-gradient(#f8f8f9, #f0f1f3);
}
.posts th:last-child {
  width: 281px;
  border-right: 0;
}
.posts td {
  height: 21px;
}
.posts td:first-child {
  border: 1px solid #d6d6de;
  border-width: 0 1px 1px 0;
}
.posts .blank td:first-child {
  border-bottom: 2px solid #c6c6d0;
}
.posts .gap td {
  height: 3px;
}
.posts .gap td:first-child {
  border-bottom-color: #c6c6d0;
}
.posts .cur td:first-child {
  height: 22px;
  border-bottom: 2px solid #ff0;
  background: #eeeff1;
}
.posts .even td {
  height: 20px;
}
.posts .even td:first-child {
  background: #f1f5fa;
}
.posts .odd td:first-child {
  background: #f5f3fd;
}
.gscroll {
  position: relative;
  align-self: stretch;
  width: 17px;
  flex: none;
  margin-top: 23px;
  display: flex;
  flex-direction: column;
  align-items: center;
  justify-content: space-between;
  background: #f4f4f6;
  color: #c9c9cf;
}
.gscroll .ico {
  width: 12px;
  height: 17px;
}
.navigator {
  display: flex;
  align-items: stretch;
  height: 19px;
  flex: none;
  gap: 2px;
  padding: 0 0 1px 1px;
  line-height: 17px;
}
.navigator :deep(.lat) {
  font-size: 13px;
}
.navigator button {
  width: 13px;
  display: flex;
  align-items: center;
  justify-content: center;
  background: #f0f0f0;
}
.navigator button .ico {
  width: 11px;
  height: 11px;
}
.navigator button:disabled {
  color: #77777f;
}
.navigator .hot {
  background: linear-gradient(#e6e6f0, #b3b0ce);
}
.navigator .cap {
  margin: 0 5px;
}
.track {
  flex: 1;
  margin-left: -1px;
  padding: 0 3px;
  display: flex;
  align-items: center;
  justify-content: space-between;
  border-top: 1px solid #ececf0;
  background: #f4f4f6;
  color: #77777f;
}
.track .ico {
  width: 10px;
  height: 10px;
}
.track.dim {
  color: #c9c9cf;
}
.thumb {
  width: 384px;
  height: 7px;
  margin: 0 auto 0 3px;
  border: 1px solid #a5a8b2;
  border-radius: 4px;
  background: linear-gradient(#e6e7eb, #cfd1d8);
}
.status {
  display: flex;
  align-items: center;
  flex: none;
  height: 27px;
  gap: 10px;
  padding: 0 4px 1px 11px;
  border-top: 1px solid #bfc0c9;
  background: linear-gradient(#dadbe0, #c6c7ce);
}
.status span {
  display: flex;
  align-items: center;
  gap: 6px;
}
.status .cap {
  display: block;
}
.status .ico {
  width: 14px;
  height: 14px;
}
.status .copy {
  margin-left: auto;
}
.status .copy .ico {
  margin-right: 4px;
}

.dialog {
  position: absolute;
  left: 310px;
  top: 157px;
  width: 983px;
  height: 671px;
  display: flex;
  flex-direction: column;
  padding: 0 3px 3px;
  border: 1px solid #9f9fae;
  background: #c8c8d0;
}
.dlg-title {
  display: flex;
  align-items: center;
  gap: 4px;
  height: 25px;
  flex: none;
  margin: 0 -3px;
  padding: 0 5px 2px 6px;
  background: linear-gradient(#ececf0 0 1px, #d9dae0 2px, #c8c9cf);
}
h2 {
  flex: 1;
  font-size: 16px;
  font-weight: 500;
  color: #55556a;
  text-shadow: 1px 1px 0 #eeeef2;
}
.dlg-body {
  flex: 1;
  min-height: 0;
  display: flex;
  flex-direction: column;
  padding: 2px 3px 3px;
  border: 1px solid #a5a5b2;
  background: #f0f0f0;
}
.dlg-top {
  flex: 1;
  min-height: 0;
  display: flex;
  border-top: 2px solid #6b6b68;
  padding-top: 1px;
}
.dlg-top .orgpane {
  width: 239px;
}
.splitter {
  width: 9px;
  flex: none;
  background: repeating-linear-gradient(#b5b5c0 0 1px, transparent 1px 3px) 6px 50% / 2px 14px no-repeat;
}
.users {
  flex: 1;
  min-width: 0;
  display: flex;
  flex-direction: column;
}
.panel {
  border: 1px solid #c0c1ca;
  border-radius: 3px;
  background: #ebecf0;
}
.query {
  display: flex;
  align-items: center;
  height: 39px;
  flex: none;
  padding: 0 0 4px 23px;
}
.query label {
  width: 56px;
}
.query input {
  width: 199px;
  height: 24px;
  margin-right: 8px;
  padding: 0 3px;
  border: 1px solid #d3d3da;
  border-top-color: #9f9fae;
  border-left-color: #b5b5c1;
  background: #fff;
}
.btn {
  height: 26px;
  border: 1px solid #adaeb8;
  border-radius: 3px;
  background: linear-gradient(#f4f5f7, #dddfe5 60%, #eaebef);
  box-shadow: inset 0 0 0 1px #f3f3f6;
  line-height: 22px;
}
.btn :deep(.lat) {
  font-size: 13px;
}
.find {
  width: 102px;
  margin-right: 6px;
}
.pick {
  width: 116px;
}
.usergrid {
  flex: 1;
  min-height: 0;
  display: flex;
  flex-direction: column;
  justify-content: space-between;
  border: 1px solid #9f9fae;
  background: #fff;
}
.people {
  width: 100%;
}
.c0 {
  width: 50px;
}
.c1 {
  width: 35px;
}
.c2 {
  width: 120px;
}
.c4 {
  width: 77px;
}
.c5 {
  width: 178px;
}
.people th {
  height: 23px;
  padding: 0 0 4px 4px;
  line-height: 18px;
  border: 1px solid #c6c6d0;
  border-width: 0 1px 1px 0;
  background: linear-gradient(#f3f4f5, #f8f8f9);
}
.people th:last-child,
.people td:last-child {
  border-right: 0;
}
.people th div {
  display: flex;
  justify-content: space-between;
  padding-right: 2px;
}
.people th .ico {
  width: 9px;
  height: 9px;
  margin-top: 2px;
  color: #85858f;
}
.people th input {
  margin-top: 3px;
}
.people td {
  height: 21px;
  padding-left: 4px;
  line-height: 18px;
  border: 1px solid #d0d0da;
  border-width: 0 1px 1px 0;
}
.people tr > :nth-child(2) {
  padding-left: 11px;
}
.people td:first-child {
  background: #f3f4f7;
}
.filter .ico {
  width: 8px;
  height: 8px;
}
.people .gap td {
  height: 3px;
  padding: 0;
  background: #fff;
  border-right: 0;
  border-bottom-color: #c6c6d0;
}
.row td + td {
  height: 22px;
  padding-bottom: 1px;
  background: #e1e8fc;
  border-bottom: 2px solid #ff0;
}
.people .row td:nth-child(3) {
  outline: 1px dotted #1e1e38;
  outline-offset: -1px;
}
.rownum {
  display: flex;
  align-items: center;
  justify-content: space-between;
  padding-right: 7px;
}
.rownum .ico {
  width: 11px;
  height: 11px;
}
.row :deep(.lat) {
  font-size: 13px;
}
.abc {
  display: flex;
  align-items: center;
  font: 700 7px/11px "Liberation Sans", sans-serif;
  text-align: center;
  color: #55555f;
}
.abc i {
  width: 4px;
  font-style: normal;
  display: flex;
  justify-content: center;
}
.abc b {
  width: 7px;
  height: 11px;
  background: #3ea64b;
  color: #fff;
}
input[type="checkbox"] {
  appearance: none;
  display: block;
  width: 13px;
  height: 13px;
  margin: 0;
  border: 1px solid #a5a5b2;
  background: linear-gradient(135deg, #d2d3da, #f2f2f5);
}
input[type="checkbox"]::after {
  content: "";
  display: block;
  width: 5px;
  height: 11px;
  margin: -3px 0 0 4px;
  border: solid #3a3a4a;
  border-width: 0 2px 2px 0;
  transform: rotate(38deg);
}
.pager {
  display: flex;
  align-items: center;
  justify-content: flex-end;
  height: 51px;
  flex: none;
  gap: 4px;
  padding: 0 3px 2px 0;
}
.pager :deep(.lat),
.selected :deep(.lat) {
  font-size: 13px;
}
.size {
  width: 66px;
  height: 22px;
}
.size select {
  font-size: 13px;
  font-weight: 400;
}
.size .caret {
  border-width: 3px;
  border-top-width: 4px;
  border-bottom: 0;
}
.pager .btn {
  width: 26px;
  height: 23px;
  font-size: 13px;
  font-weight: 400;
  line-height: 20px;
  color: #9b9bab;
  border-color: #cccdd5;
}
.pager input {
  width: 49px;
  height: 20px;
  padding: 0 2px 3px;
  border: 0;
  border-bottom: 1px solid #6b6b68;
  background: #fff;
  font-size: 11px;
  font-weight: 400;
}
.selected {
  height: 104px;
  flex: none;
}
h3 {
  height: 22px;
  padding-left: 11px;
  font-size: 15px;
  line-height: 18px;
  border-bottom: 1px solid #d0d1d8;
  background: linear-gradient(#e8e9ec, #dfe0e4);
}
.chips {
  display: flex;
  gap: 6px;
  padding: 4px;
}
.chips > span {
  display: flex;
  align-items: center;
  gap: 4px;
}
.chips button {
  width: 23px;
  height: 24px;
  display: flex;
  align-items: center;
  justify-content: center;
  border: 1px solid #fff;
  border-right-color: #a0a0a0;
  border-bottom-color: #a0a0a0;
  background: #f0f0f0;
}
.chips .ico {
  width: 14px;
  height: 14px;
}
.actions {
  display: flex;
  align-items: center;
  justify-content: flex-end;
  height: 45px;
  flex: none;
  padding-right: 4px;
}
.clear {
  width: 98px;
  margin-right: 24px;
}
.ok {
  width: 91px;
  margin-right: 14px;
}
.close {
  width: 89px;
}
.resize {
  position: absolute;
  right: 5px;
  bottom: 5px;
  width: 11px;
  height: 11px;
  clip-path: polygon(100% 0, 100% 100%, 0 100%);
  background: radial-gradient(#85859a 1px, transparent 1px) 0 0 / 4px 4px;
}
</style>
